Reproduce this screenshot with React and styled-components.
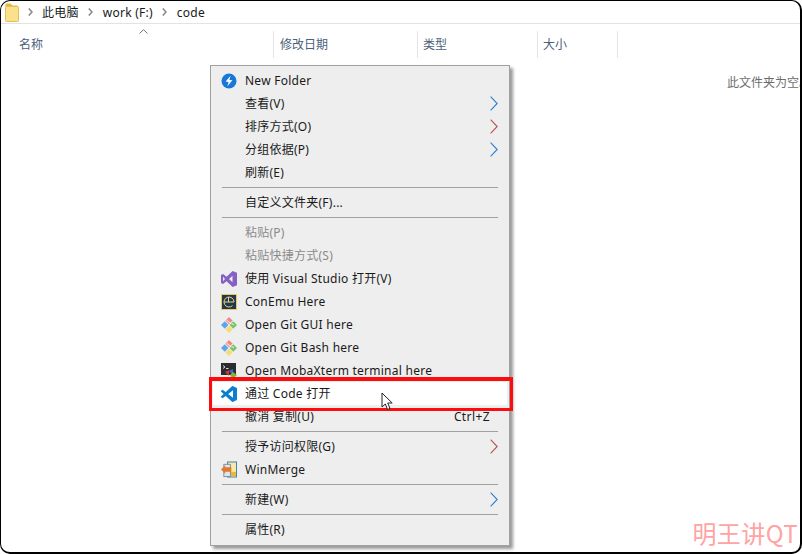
import styled, { createGlobalStyle } from "styled-components";

const GlobalStyle = createGlobalStyle`
  html, body {
    margin: 0;
    padding: 0;
    background: #fff;
    overflow: hidden;
  }
  body {
    font-family: "Noto Sans", "Noto Sans CJK SC", sans-serif;
    font-size: 12px;
  }
`;

function FolderIcon() {
  return (
    <svg width="14" height="19" viewBox="0 0 14 19">
      <path d="M0.5 4 L0.5 1.5 Q0.5 0.5 1.5 0.5 L5.5 0.5 L7.5 2.5 L12.5 2.5 L12.5 4 Z" fill="#e8b93f" />
      <rect x="0.5" y="3.5" width="13" height="15" rx="1" fill="#fbe08d" stroke="#e4bd55" />
    </svg>
  );
}

function Crumb() {
  return (
    <svg width="5" height="8" viewBox="0 0 5 8">
      <path d="M0.8 0.5 L4 4 L0.8 7.5" fill="none" stroke="#8a8a8a" strokeWidth="1.6" />
    </svg>
  );
}

function SortCaret() {
  return (
    <svg width="9" height="5" viewBox="0 0 9 5">
      <path d="M0.5 4.5 L4.5 0.7 L8.5 4.5" fill="none" stroke="#7a7a7a" />
    </svg>
  );
}

function Chevron({ color }) {
  return (
    <svg width="8" height="15" viewBox="0 0 8 15">
      <path d="M0.6 0.6 L7.2 7.5 L0.6 14.4" fill="none" stroke={color} strokeWidth="1.1" />
    </svg>
  );
}

function BoltIcon() {
  return (
    <svg width="16" height="16" viewBox="0 0 16 16">
      <circle cx="8" cy="8" r="7.5" fill="#1878d8" />
      <path d="M9.6 2.8 L4.6 8.6 L7.6 8.9 L6.4 13.2 L11.4 7.2 L8.4 6.9 Z" fill="#fff" />
    </svg>
  );
}

function VisualStudioIcon() {
  return (
    <svg width="16" height="16" viewBox="0 0 16 16">
      <path
        fillRule="evenodd"
        d="M11.6 0 L16 1.8 L16 14.2 L11.6 16 L5.6 10.2 L2 13 L0 12 L0 4 L2 3 L5.6 5.8 Z M11.5 4.8 L8 8 L11.5 11.2 Z M2 5.8 L2 10.2 L4 8 Z"
        fill="#8661c5"
      />
    </svg>
  );
}

function ConEmuIcon() {
  return (
    <svg width="16" height="16" viewBox="0 0 16 16">
      <rect x="0.5" y="0.5" width="15" height="15" fill="#1e3a50" stroke="#efc65b" />
      <path d="M3 8 L13 8 M13 8 A5 5 0 1 0 11.5 11.6 M7.5 3 L7.5 8" fill="none" stroke="#f1d27a" />
    </svg>
  );
}

function GitIcon() {
  return (
    <svg width="16" height="16" viewBox="0 0 16 16">
      <path d="M8 0 L11.6 3.6 L8 7.2 L4.4 3.6 Z" fill="#f08a84" />
      <path d="M3.8 4.2 L7.4 8 L3.8 11.8 L0 8 Z" fill="#5aa6ee" />
      <path d="M12.2 4.2 L16 8 L12.2 11.8 L8.6 8 Z" fill="#76c267" />
      <path d="M8 8.8 L11.6 12.4 L8 16 L4.4 12.4 Z" fill="#f6dc72" />
      <path d="M5.5 3 L10.5 7 M11 6.5 L13 8" stroke="#fff" strokeWidth="0.9" />
    </svg>
  );
}

function MobaIcon() {
  return (
    <svg width="16" height="16" viewBox="0 0 16 16">
      <rect x="0" y="0" width="15" height="12" fill="#2c2c30" />
      <path d="M2 2.5 L4 4 L2 5.5 M5 5.5 L7.5 5.5" fill="none" stroke="#fff" strokeWidth="0.8" />
      <path d="M4 9 L8 7 L8 13 Z" fill="#d9352c" />
      <path d="M8 8 L12 6 L12 12 Z" fill="#3a6fd0" />
      <path d="M9 12 L12 9 L16 12 L12 16 Z" fill="#79b83a" />
    </svg>
  );
}

function VsCodeIcon() {
  return (
    <svg width="16" height="16" viewBox="0 0 24 24">
      <path
        d="M23.15 2.587L18.21.21a1.494 1.494 0 0 0-1.705.29l-9.46 8.63-4.12-3.128a.999.999 0 0 0-1.276.057L.327 7.261A1 1 0 0 0 .326 8.74L3.899 12 .326 15.26a1 1 0 0 0 .001 1.479L1.65 17.94a.999.999 0 0 0 1.276.057l4.12-3.128 9.46 8.63a1.492 1.492 0 0 0 1.704.29l4.942-2.377A1.5 1.5 0 0 0 24 20.06V3.939a1.5 1.5 0 0 0-.85-1.352zm-5.146 14.861L10.826 12l7.178-5.448v10.896z"
        fill="#0a7fd0"
      />
    </svg>
  );
}

function WinMergeIcon() {
  return (
    <svg width="17" height="17" viewBox="0 0 17 17">
      <rect x="7" y="0.5" width="9.5" height="16" fill="#f7e9a8" stroke="#3f78b5" />
      <rect x="9" y="11" width="7" height="5" fill="#e7b93a" />
      <rect x="3" y="3" width="7" height="13" fill="#dde6ef" stroke="#7a8ea5" />
      <path d="M0 8.5 L4.5 4 L4.5 6.2 L11 6.2 L11 10.8 L4.5 10.8 L4.5 13 Z" fill="#e07a2c" />
    </svg>
  );
}

function Cursor() {
  return (
    <svg width="13" height="20" viewBox="0 0 13 20">
      <path d="M1 1 L1 15 L4.3 12 L6.6 17.5 L9 16.4 L6.7 11 L11.2 11 Z" fill="#fff" stroke="#222" strokeWidth="1" strokeLinejoin="round" />
    </svg>
  );
}

const columns = [
  { name: "名称", width: 273, pad: 19 },
  { name: "修改日期", width: 144, pad: 7 },
  { name: "类型", width: 120, pad: 6 },
  { name: "大小", width: 80, pad: 6 },
];

const menu = [
  [
    { label: "New Folder", icon: <BoltIcon /> },
    { label: "查看(V)", arrow: "#2a7fd0", cjk: true },
    { label: "排序方式(O)", arrow: "#b5534f", cjk: true },
    { label: "分组依据(P)", arrow: "#2a7fd0", cjk: true },
    { label: "刷新(E)", cjk: true },
  ],
  [{ label: "自定义文件夹(F)...", cjk: true }],
  [
    { label: "粘贴(P)", disabled: true, cjk: true },
    { label: "粘贴快捷方式(S)", disabled: true, cjk: true },
    { label: "使用 Visual Studio 打开(V)", icon: <VisualStudioIcon />, cjk: true },
    { label: "ConEmu Here", icon: <ConEmuIcon /> },
    { label: "Open Git GUI here", icon: <GitIcon /> },
    { label: "Open Git Bash here", icon: <GitIcon /> },
    { label: "Open MobaXterm terminal here", icon: <MobaIcon /> },
    { label: "通过 Code 打开", icon: <VsCodeIcon />, active: true, cjk: true },
    { label: "撤消 复制(U)", shortcut: "Ctrl+Z", cjk: true },
  ],
  [
    { label: "授予访问权限(G)", arrow: "#b5534f", cjk: true },
    { label: "WinMerge", icon: <WinMergeIcon /> },
  ],
  [{ label: "新建(W)", arrow: "#2a7fd0", cjk: true }],
  [{ label: "属性(R)", cjk: true }],
];

export default function App() {
  return (
    <>
      <GlobalStyle />
      <Window>
        <AddressBar>
          <FolderIcon />
          <Crumb />
          <CrumbText $gap={9}>此电脑</CrumbText>
          <Crumb />
          <CrumbText $gap={10}>work (F:)</CrumbText>
          <Crumb />
          <CrumbText $gap={10}>code</CrumbText>
        </AddressBar>
        <HeaderRow>
          {columns.map((c) => (
            <HeaderCell key={c.name} $width={c.width} $pad={c.pad}>
              {c.name}
            </HeaderCell>
          ))}
          <Caret>
            <SortCaret />
          </Caret>
        </HeaderRow>
        <Empty>此文件夹为空。</Empty>

        <Menu>
          {menu.map((group, i) => (
            <Group key={i}>
              {group.map((item) => (
                <Item key={item.label} $active={item.active} $disabled={item.disabled}>
                  <IconSlot>{item.icon}</IconSlot>
                  <Label $cjk={item.cjk}>{item.label}</Label>
                  {item.shortcut && <Shortcut>{item.shortcut}</Shortcut>}
                  {item.arrow && (
                    <ArrowSlot>
                      <Chevron color={item.arrow} />
                    </ArrowSlot>
                  )}
                </Item>
              ))}
            </Group>
          ))}
        </Menu>

        <Highlight />
        <CursorSpot>
          <Cursor />
        </CursorSpot>
        <Watermark>明王讲QT</Watermark>
      </Window>
    </>
  );
}

const Window = styled.div`
  position: relative;
  box-sizing: border-box;
  width: 802px;
  height: 554px;
  overflow: hidden;
  background: #fff;
  border: 1px solid #000;
  border-right-width: 2px;
  border-bottom-width: 2px;
  border-radius: 10px;
`;

const AddressBar = styled.div`
  display: flex;
  align-items: center;
  height: 22px;
  padding-left: 4px;
  border-bottom: 1px solid #e3e3e3;
  color: #1a1a1a;
  letter-spacing: 0.25px;
  svg:nth-of-type(n + 2) {
    margin-left: 9px;
  }
`;

const CrumbText = styled.span`
  margin-left: ${(p) => p.$gap}px;
  white-space: nowrap;
`;

const HeaderRow = styled.div`
  position: relative;
  display: flex;
  margin-top: 7px;
  height: 27px;
  color: #4c607a;
`;

const HeaderCell = styled.div`
  box-sizing: border-box;
  width: ${(p) => p.$width}px;
  padding: 4px 0 0 ${(p) => p.$pad - 1}px;
  border-right: 1px solid #e5e5e5;
  white-space: nowrap;
`;

const Caret = styled.span`
  position: absolute;
  left: 138px;
  top: -2px;
  line-height: 0;
`;

const Empty = styled.div`
  margin: 15px 0 0 726px;
  color: #6d6d6d;
  white-space: nowrap;
`;

const Menu = styled.div`
  position: absolute;
  left: 209px;
  top: 64px;
  box-sizing: border-box;
  width: 300px;
  height: 481px;
  padding: 3px 2px;
  background: #eee;
  border: 1px solid #a0a0a0;
  box-shadow: 3px 3px 3px rgba(0, 0, 0, 0.4);
`;

const Group = styled.div`
  & + & {
    margin-top: 3px;
    padding-top: 4px;
    position: relative;
  }
  & + &::before {
    content: "";
    position: absolute;
    top: 0;
    left: 9px;
    right: 9px;
    height: 1px;
    background: #a0a0a0;
  }
`;

const Item = styled.div`
  display: flex;
  align-items: center;
  height: 23px;
  color: ${(p) => (p.$disabled ? "#8a8a8a" : "#1a1a1a")};
  background: ${(p) => (p.$active ? "#fff" : "transparent")};
`;

const IconSlot = styled.span`
  display: flex;
  justify-content: center;
  align-items: center;
  flex: none;
  width: 16px;
  height: 17px;
  margin-left: 8px;
  margin-right: 8px;
`;

const Label = styled.span`
  flex: 1;
  white-space: nowrap;
  letter-spacing: 0.25px;
  padding-bottom: ${(p) => (p.$cjk ? "2px" : "0")};
`;

const Shortcut = styled.span`
  margin-right: 17px;
  white-space: nowrap;
  letter-spacing: 0.4px;
`;

const ArrowSlot = styled.span`
  display: flex;
  margin-right: 9px;
`;

const Highlight = styled.div`
  position: absolute;
  left: 208px;
  top: 376px;
  box-sizing: border-box;
  width: 304px;
  height: 34px;
  border: 3px solid #fb0d0d;
  border-top-width: 4px;
`;

const CursorSpot = styled.div`
  position: absolute;
  left: 380px;
  top: 391px;
  line-height: 0;
`;

const Watermark = styled.div`
  position: absolute;
  right: 2px;
  bottom: 5px;
  font-size: 24px;
  line-height: 28px;
  letter-spacing: 0.4px;
  font-weight: 400;
  color: #ffa3a3;
  font-family: "Noto Sans CJK SC", "Noto Sans", sans-serif;
`;
